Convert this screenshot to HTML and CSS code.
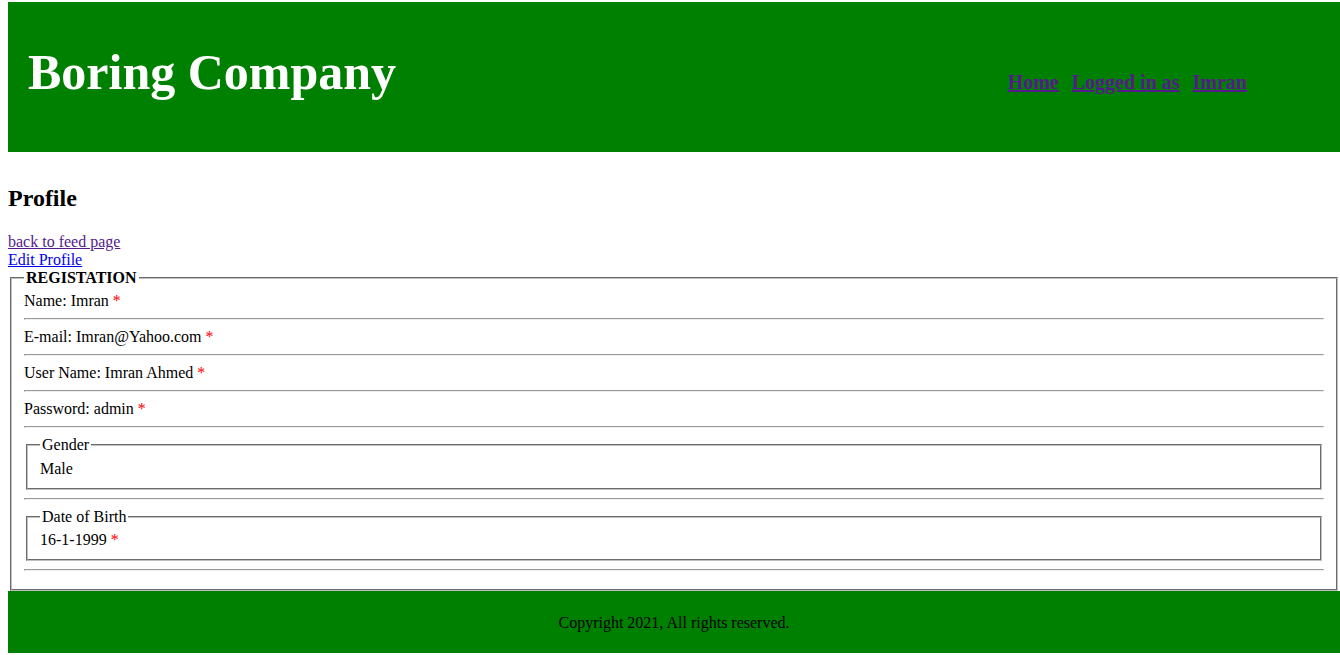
FILE: index.html
```html
<!DOCTYPE html>
<html>
<head>
<meta charset="utf-8">
<title>Profile</title>
<link rel="stylesheet" href="styles.css">
</head>
<body>
<header class="site-header">
  <h1 class="brand">Boring Company</h1>
  <nav class="nav">
    <a href="#" class="nav-link visited">Home</a>
    <a href="#" class="nav-link visited">Logged in as</a>
    <a href="#" class="nav-link visited">Imran</a>
  </nav>
</header>
<main class="content">
  <h2 class="page-title">Profile</h2>
  <a href="#" class="link visited">back to feed page</a><br>
  <a href="#" class="link">Edit Profile</a>
  <fieldset class="form">
    <legend class="form-legend">REGISTATION</legend>
    <div class="row">Name: Imran <span class="req">*</span></div>
    <hr class="sep">
    <div class="row">E-mail: Imran@Yahoo.com <span class="req">*</span></div>
    <hr class="sep">
    <div class="row">User Name: Imran Ahmed <span class="req">*</span></div>
    <hr class="sep">
    <div class="row">Password: admin <span class="req">*</span></div>
    <hr class="sep">
    <fieldset class="sub">
      <legend class="sub-legend">Gender</legend>
      <div class="row">Male</div>
    </fieldset>
    <hr class="sep">
    <fieldset class="sub">
      <legend class="sub-legend">Date of Birth</legend>
      <div class="row">16-1-1999 <span class="req">*</span></div>
    </fieldset>
    <hr class="sep">
  </fieldset>
</main>
<footer class="site-footer">
  <p class="copy">Copyright 2021, All rights reserved.</p>
</footer>
</body>
</html>
```

FILE: styles.css
```css
html, body {
  font-family: "Liberation Serif", "Times New Roman", serif;
  font-size: 16px;
  color: #000;
}
body {
  margin: 2px 0 0 8px;
}
.site-header {
  background: #008000;
  height: 150px;
  display: flex;
  align-items: flex-start;
}
.brand {
  margin: 41px 0 0 20px;
  font-size: 50px;
  font-weight: bold;
  color: #fff;
  line-height: normal;
}
.nav {
  margin: 69px 93px 0 auto;
  display: flex;
  gap: 13px;
  font-size: 20px;
  font-weight: bold;
}
.nav-link {
  text-decoration: underline;
}
a { color: #0000ee; }
a.visited { color: #551a8b; }
.page-title {
  font-size: 24px;
  font-weight: bold;
  margin: 33px 0 21px 0;
}
.form {
  margin: 0 2px 0 2px;
  border: 2px groove #c0c0c0;
  padding: 5px 12px 10px 12px;
}
.form-legend {
  font-weight: bold;
  padding: 0 2px;
}
.row {
  line-height: normal;
}
.req { color: red; }
.sep {
  margin: 8px 0;
}
.sub {
  margin: 0 2px;
  border: 2px groove #c0c0c0;
  padding: 5.6px 12px 10px 12px;
}
.sub-legend {
  padding: 0 2px;
}
.site-footer {
  background: #008000;
  height: 62px;
  display: flex;
  align-items: center;
  justify-content: center;
}
.copy {
  margin: 0;
  padding-top: 1px;
}
```
